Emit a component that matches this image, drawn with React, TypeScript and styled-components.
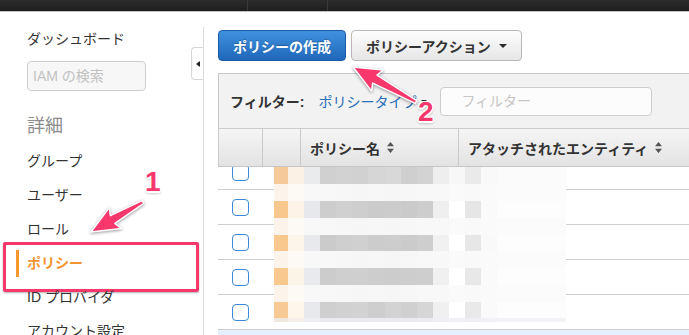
import styled, { createGlobalStyle, css } from 'styled-components'

const PINK = '#f8376c'

const GlobalStyle = createGlobalStyle`
  * {
    box-sizing: border-box;
  }
  html,
  body {
    margin: 0;
    padding: 0;
    background: #ffffff;
  }
  body {
    color: #333333;
    font-family: 'Liberation Sans', 'Noto Sans CJK JP', sans-serif;
  }
`

const Page = styled.div`
  background: #ffffff;
  height: 335px;
  overflow: hidden;
  position: relative;
  width: 689px;
`

const TopBar = styled.div`
  background: linear-gradient(#2c2c2c, #1e1e1e);
  border-bottom: 1px solid #c2c2c2;
  display: flex;
  height: 12px;
`

const TopBarSlot = styled.div<{ $width: number }>`
  border-right: 1px solid #383838;
  width: ${p => p.$width}px;
`

const Layout = styled.div`
  display: flex;
  height: 323px;
`

const Sidebar = styled.nav`
  border-right: 1px solid #dedede;
  flex: 0 0 204px;
  margin-top: 15px;
  padding-top: 2px;
  position: relative;
`

const Dashboard = styled.div`
  color: #333333;
  font-size: 14px;
  line-height: 20px;
  padding-left: 27px;
`

const SearchInput = styled.input`
  background: #f7f7f7;
  border: 1px solid #cfcfcf;
  border-radius: 4px;
  color: #333333;
  display: block;
  font-family: inherit;
  font-size: 14px;
  height: 30px;
  margin: 12px 0 0 27px;
  outline: none;
  padding: 0 0 0 5px;
  width: 119px;

  &::placeholder {
    color: #c2c2c2;
  }
`

const SectionTitle = styled.div`
  color: #8c8c8c;
  font-size: 18px;
  line-height: 24px;
  margin-top: 23px;
  padding-left: 27px;
`

const NavList = styled.div`
  margin-top: 5px;
`

const NavItem = styled.div<{ $active?: boolean }>`
  align-items: center;
  color: #333333;
  display: flex;
  font-size: 14px;
  height: 34px;
  padding-left: 27px;
  position: relative;

  ${p =>
    p.$active &&
    css`
      color: #f3932f;
      font-weight: 700;

      &::before {
        background: #f7982f;
        bottom: 2px;
        content: '';
        left: 16px;
        position: absolute;
        top: 5px;
        width: 3px;
      }

      /* annotation box drawn over the active item */
      &::after {
        border: 3px solid ${PINK};
        border-radius: 2px;
        box-shadow: 0 1px 2px rgba(0, 0, 0, 0.3);
        content: '';
        height: 44px;
        left: 3px;
        position: absolute;
        top: -3px;
        width: 190px;
      }
    `}
`

const ToggleTab = styled.div`
  background: #ffffff;
  border: 1px solid #d6d6d6;
  border-radius: 4px 0 0 4px;
  border-right: 0;
  height: 33px;
  position: absolute;
  right: 0;
  top: 20px;
  width: 12px;

  &::after {
    border-bottom: 3px solid transparent;
    border-right: 4px solid #222222;
    border-top: 3px solid transparent;
    content: '';
    left: 4px;
    position: absolute;
    top: 13px;
  }
`

const Main = styled.main`
  flex: 1;
  min-width: 0;
  padding: 18px 0 0 14px;
`

const Toolbar = styled.div`
  display: flex;
  gap: 5px;
`

const Button = styled.button<{ $primary?: boolean }>`
  align-items: center;
  border-radius: 4px;
  display: inline-flex;
  font-family: inherit;
  font-size: 14px;
  font-weight: 700;
  gap: 8px;
  height: 31px;
  padding: 0 14px;
  white-space: nowrap;

  ${p =>
    p.$primary
      ? css`
          background: linear-gradient(#3f91df, #1f67ba);
          border: 1px solid #1b5ca6;
          color: #ffffff;
          text-shadow: 0 -1px 0 rgba(0, 0, 0, 0.25);
        `
      : css`
          background: linear-gradient(#fdfdfd, #e6e6e6);
          border: 1px solid #b9b9b9;
          color: #333333;
        `}
`

const Caret = styled.span<{ $size?: number }>`
  border-left: ${p => p.$size || 4}px solid transparent;
  border-right: ${p => p.$size || 4}px solid transparent;
  border-top: ${p => p.$size || 4}px solid #2a2a2a;
  height: 0;
  width: 0;
`

const Panel = styled.section`
  margin-top: 12px;
`

const FilterBar = styled.div`
  align-items: center;
  background: #f2f2f2;
  border: 1px solid #cacaca;
  border-bottom: 0;
  border-right: 0;
  display: flex;
  height: 55px;
  padding-left: 11px;
`

const FilterLabel = styled.span`
  color: #333333;
  font-size: 14px;
  font-weight: 700;
  margin-right: 14px;
  white-space: nowrap;
`

const FilterLink = styled.span`
  align-items: center;
  color: #2b6cb8;
  display: inline-flex;
  font-size: 14px;
  gap: 5px;
  white-space: nowrap;
`

const FilterInput = styled.input`
  background: #fcfcfc;
  border: 1px solid #cdcdcd;
  border-radius: 4px;
  flex: 0 0 212px;
  font-family: inherit;
  font-size: 14px;
  height: 29px;
  margin-left: 13px;
  outline: none;
  padding-left: 20px;

  &::placeholder {
    color: #c6c6c6;
  }
`

const HeaderRow = styled.div`
  background: linear-gradient(#f5f5f5, #e3e3e3);
  border-bottom: 1px solid #c6c6c6;
  border-left: 1px solid #cacaca;
  border-top: 1px solid #cacaca;
  display: grid;
  grid-template-columns: 43px 38px 158px 1fr;
  height: 39px;
`

const HeaderCell = styled.div<{ $divider?: boolean }>`
  align-items: center;
  border-left: ${p => (p.$divider ? '1px solid #cacaca' : '0')};
  color: #333333;
  display: flex;
  font-size: 14px;
  font-weight: 700;
  gap: 7px;
  padding-left: 9px;
  white-space: nowrap;
`

const TableBody = styled.div`
  height: 168px;
  overflow: hidden;
  position: relative;
`

const RowList = styled.div`
  margin-top: -12px;
`

const Row = styled.div<{ $selected?: boolean }>`
  background: ${p => (p.$selected ? '#e4effb' : '#ffffff')};
  border-bottom: 1px solid #cfcfcf;
  display: grid;
  grid-template-columns: 44px 38px 158px 1fr;
  height: 35px;
`

const CheckCell = styled.div`
  align-items: center;
  display: flex;
  justify-content: center;
`

const Checkbox = styled.span`
  background: #ffffff;
  border: 1px solid #3d88d8;
  border-radius: 4px;
  height: 17px;
  width: 17px;
`

const Mosaic = styled.svg`
  left: 56px;
  position: absolute;
  top: 0;
`

const Overlay = styled.svg`
  filter: drop-shadow(0 1px 1.5px rgba(0, 0, 0, 0.4));
  left: 0;
  pointer-events: none;
  position: absolute;
  top: 0;
`

const StepNumber = styled.span<{ $x: number; $y: number }>`
  color: ${PINK};
  font-family: 'Liberation Sans', sans-serif;
  font-size: 28px;
  font-weight: 700;
  left: ${p => p.$x}px;
  line-height: 1;
  pointer-events: none;
  position: absolute;
  text-shadow:
    1.5px 0 0 #fff,
    -1.5px 0 0 #fff,
    0 1.5px 0 #fff,
    0 -1.5px 0 #fff,
    1px 1px 0 #fff,
    -1px -1px 0 #fff,
    1px -1px 0 #fff,
    -1px 1px 0 #fff,
    0 2px 3px rgba(0, 0, 0, 0.4);
  top: ${p => p.$y}px;
`

function SortIcon() {
  return (
    <svg width="7" height="11" viewBox="0 0 7 11">
      <path d="M3.5 0 L7 4.2 L0 4.2 Z M0 6.8 L7 6.8 L3.5 11 Z" fill="#555" />
    </svg>
  )
}

const MOSAIC_X = [0, 14, 30, 46, 62, 78, 94, 111, 127, 143, 159, 175, 191, 207, 223, 292]
const MOSAIC_Y = [0, 17, 34, 51, 68, 84, 101, 118, 135, 151, 155]
const LIGHT = ['#fcf4eb', '#fdfaf6', '#f8f8f8', '#f8f8f8', '#f7f7f7', '#f6f6f6', '#f7f7f7', '#f6f6f6', '#f7f7f7', '#f8f8f8', '#f8f8f8', '#fafafa', '#f9f9f9', '#fafafa', '#fbfbfb']
const MOSAIC_ROWS = [
  ['#f5ca98', '#fbf1e4', '#eaebed', '#d0d0d0', '#d2d2d2', '#d1d1d1', '#d6d6d6', '#d8d8d8', '#cfcfcf', '#d3d3d3', '#eeeeee', '#f7f7f7', '#eaeaea', '#f9f9f9', '#fbfbfb'],
  LIGHT,
  ['#f8c78e', '#fdf3e6', '#e7e8eb', '#cdcdcd', '#d0d0d0', '#cecece', '#cbcbcb', '#cccccc', '#cacaca', '#cdcdcd', '#efefef', '#ffffff', '#e6e6e6', '#fafafa', '#fdfdfd'],
  LIGHT,
  ['#f8c88f', '#fdf5e9', '#e8e9ed', '#cbcbcb', '#cfcfcf', '#d0d0d0', '#cccccc', '#cdcdcd', '#cbcbcb', '#cecece', '#f1f1f1', '#ffffff', '#e7e7e7', '#f9f9f9', '#fdfdfd'],
  LIGHT,
  ['#f8c88f', '#fdf4e8', '#e9eaed', '#cccccc', '#cfcfcf', '#cfcfcf', '#cdcdcd', '#cccccc', '#cdcdcd', '#cecece', '#f0f0f0', '#ffffff', '#e8e8e8', '#fafafa', '#fdfdfd'],
  LIGHT,
  ['#f7ca95', '#fdf6ea', '#e8e9ec', '#cfcfcf', '#d1d1d1', '#d2d2d2', '#cecece', '#d3d3d3', '#d0d0d0', '#d6d6d6', '#f0f0f0', '#ffffff', '#e9e9e9', '#fafafa', '#fdfdfd'],
  ['#efe8df', '#f4efe8', '#eceef2', '#e8eaee', '#e8eaee', '#e8eaee', '#e9ebef', '#e9ebef', '#e9ebef', '#eaecf0', '#eef0f4', '#f0f2f6', '#eef0f4', '#f0f2f6', '#f1f3f7'],
]

function CensorMosaic() {
  return (
    <Mosaic width="292" height="155" shapeRendering="crispEdges">
      {MOSAIC_ROWS.map((colors, r) =>
        colors.map((fill, c) => (
          <rect
            key={`${r}-${c}`}
            x={MOSAIC_X[c]}
            y={MOSAIC_Y[r]}
            width={MOSAIC_X[c + 1] - MOSAIC_X[c]}
            height={MOSAIC_Y[r + 1] - MOSAIC_Y[r]}
            fill={fill}
          />
        )),
      )}
    </Mosaic>
  )
}

// tapered callout arrow, from tail (sx, sy) to tip (tx, ty)
function arrowPoints(sx: number, sy: number, tx: number, ty: number) {
  const head = 25
  const wing = 12
  const neck = 4.5
  const tail = 1.6
  const len = Math.hypot(tx - sx, ty - sy)
  const ux = (tx - sx) / len
  const uy = (ty - sy) / len
  const nx = -uy
  const ny = ux
  const bx = tx - ux * head
  const by = ty - uy * head
  const pts = [
    [sx + nx * tail, sy + ny * tail],
    [bx + nx * neck, by + ny * neck],
    [bx - ux * 3 + nx * wing, by - uy * 3 + ny * wing],
    [tx, ty],
    [bx - ux * 3 - nx * wing, by - uy * 3 - ny * wing],
    [bx - nx * neck, by - ny * neck],
    [sx - nx * tail, sy - ny * tail],
  ]
  return pts.map(p => p.map(v => v.toFixed(1)).join(',')).join(' ')
}

const NAV = ['グループ', 'ユーザー', 'ロール', 'ポリシー', 'ID プロバイダ', 'アカウント設定']
const ROWS = [0, 1, 2, 3, 4]

export default function App() {
  return (
    <Page>
      <GlobalStyle />
      <TopBar>
        <TopBarSlot $width={248} />
        <TopBarSlot $width={80} />
      </TopBar>

      <Layout>
        <Sidebar>
          <Dashboard>ダッシュボード</Dashboard>
          <SearchInput placeholder="IAM の検索" />
          <SectionTitle>詳細</SectionTitle>
          <NavList>
            {NAV.map(label => (
              <NavItem key={label} $active={label === 'ポリシー'}>
                {label}
              </NavItem>
            ))}
          </NavList>
          <ToggleTab />
        </Sidebar>

        <Main>
          <Toolbar>
            <Button $primary>ポリシーの作成</Button>
            <Button>
              ポリシーアクション
              <Caret />
            </Button>
          </Toolbar>

          <Panel>
            <FilterBar>
              <FilterLabel>フィルター:</FilterLabel>
              <FilterLink>
                ポリシータイプ
                <Caret $size={3} />
              </FilterLink>
              <FilterInput placeholder="フィルター" />
            </FilterBar>

            <HeaderRow>
              <HeaderCell />
              <HeaderCell $divider />
              <HeaderCell $divider>
                ポリシー名
                <SortIcon />
              </HeaderCell>
              <HeaderCell $divider>
                アタッチされたエンティティ
                <SortIcon />
              </HeaderCell>
            </HeaderRow>

            <TableBody>
              <RowList>
                {ROWS.map(i => (
                  <Row key={i}>
                    <CheckCell>
                      <Checkbox />
                    </CheckCell>
                  </Row>
                ))}
                <Row $selected />
              </RowList>
              <CensorMosaic />
            </TableBody>
          </Panel>
        </Main>
      </Layout>

      <Overlay width="689" height="335">
        <polygon points={arrowPoints(143, 202, 91, 232)} fill={PINK} stroke="#fff" strokeWidth="1.5" strokeLinejoin="round" />
        <polygon points={arrowPoints(416, 102, 353, 67)} fill={PINK} stroke="#fff" strokeWidth="1.5" strokeLinejoin="round" />
      </Overlay>
      <StepNumber $x={145} $y={168}>1</StepNumber>
      <StepNumber $x={418} $y={98}>2</StepNumber>
    </Page>
  )
}
